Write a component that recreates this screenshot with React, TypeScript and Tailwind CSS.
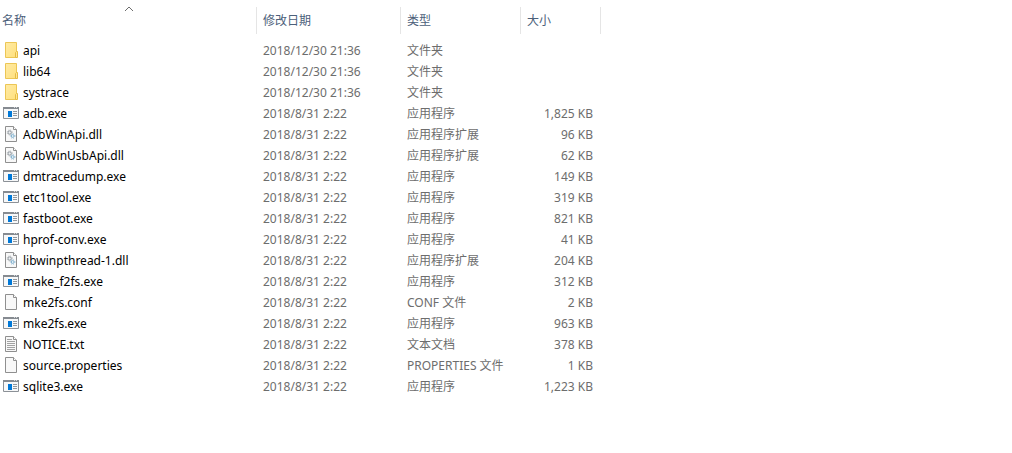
import React, { useState } from "react";

type Kind = "folder" | "exe" | "dll" | "blank" | "text";

const FILES: { name: string; date: string; type: string; size: string; kind: Kind }[] = [
  { name: "api", date: "2018/12/30 21:36", type: "文件夹", size: "", kind: "folder" },
  { name: "lib64", date: "2018/12/30 21:36", type: "文件夹", size: "", kind: "folder" },
  { name: "systrace", date: "2018/12/30 21:36", type: "文件夹", size: "", kind: "folder" },
  { name: "adb.exe", date: "2018/8/31 2:22", type: "应用程序", size: "1,825 KB", kind: "exe" },
  { name: "AdbWinApi.dll", date: "2018/8/31 2:22", type: "应用程序扩展", size: "96 KB", kind: "dll" },
  { name: "AdbWinUsbApi.dll", date: "2018/8/31 2:22", type: "应用程序扩展", size: "62 KB", kind: "dll" },
  { name: "dmtracedump.exe", date: "2018/8/31 2:22", type: "应用程序", size: "149 KB", kind: "exe" },
  { name: "etc1tool.exe", date: "2018/8/31 2:22", type: "应用程序", size: "319 KB", kind: "exe" },
  { name: "fastboot.exe", date: "2018/8/31 2:22", type: "应用程序", size: "821 KB", kind: "exe" },
  { name: "hprof-conv.exe", date: "2018/8/31 2:22", type: "应用程序", size: "41 KB", kind: "exe" },
  { name: "libwinpthread-1.dll", date: "2018/8/31 2:22", type: "应用程序扩展", size: "204 KB", kind: "dll" },
  { name: "make_f2fs.exe", date: "2018/8/31 2:22", type: "应用程序", size: "312 KB", kind: "exe" },
  { name: "mke2fs.conf", date: "2018/8/31 2:22", type: "CONF 文件", size: "2 KB", kind: "blank" },
  { name: "mke2fs.exe", date: "2018/8/31 2:22", type: "应用程序", size: "963 KB", kind: "exe" },
  { name: "NOTICE.txt", date: "2018/8/31 2:22", type: "文本文档", size: "378 KB", kind: "text" },
  { name: "source.properties", date: "2018/8/31 2:22", type: "PROPERTIES 文件", size: "1 KB", kind: "blank" },
  { name: "sqlite3.exe", date: "2018/8/31 2:22", type: "应用程序", size: "1,223 KB", kind: "exe" },
];

const COLUMNS = ["名称", "修改日期", "类型", "大小"];

function FileIcon({ kind }: { kind: Kind }) {
  if (kind === "folder") {
    return (
      <svg className="mt-0.5 w-4 h-4 shrink-0" viewBox="0 0 16 16" aria-hidden="true">
        <defs>
          <linearGradient id="folder" x1="0" y1="0" x2="1" y2="1">
            <stop offset="0" stopColor="#ffeba6" />
            <stop offset="1" stopColor="#ffe07c" />
          </linearGradient>
        </defs>
        <path d="M2.5 .5h11v15h-11z" fill="url(#folder)" stroke="#ecc655" />
        <path d="M12.5 15.5v-5l1-1h1v6z" fill="#ffe692" stroke="#e6bc45" />
      </svg>
    );
  }
  if (kind === "exe") {
    return (
      <svg className="mt-0.5 w-4 h-4 shrink-0" viewBox="0 0 16 16" aria-hidden="true">
        <path d="M.5 2.5h15v11H.5z" fill="#f7f8f9" stroke="#8c9197" />
        <path d="M0 2h16v2H0z" fill="#868b91" />
        <path d="M11 2h1v1h-1zM13 2h1v1h-1z" fill="#d5d8db" />
        <path d="M5 6h4v6H5z" fill="#0078d7" />
        <path d="M10 6.5h4M10 8.5h4M10 10.5h4" stroke="#92979c" />
      </svg>
    );
  }
  return (
    <svg className="mt-0.5 w-4 h-4 shrink-0" viewBox="0 0 16 16" aria-hidden="true">
      <path d="M2.5 .5h8l3 3v12h-11z" fill="#f8f8f8" stroke="#8f8f8f" />
      <path d="M10.5 .5v3h3" fill="#fff" stroke="#8f8f8f" />
      {kind === "text" && (
        <path d="M4 3.5h5M4 5.5h8M4 7.5h8M4 9.5h8M4 11.5h8M4 13.5h8" stroke="#a2a2a2" />
      )}
      {kind === "dll" && (
        <>
          <circle cx="6.7" cy="6.5" r="1.6" fill="#eef1f3" stroke="#9299a0" />
          <circle cx="6.7" cy="6.5" r="2.5" fill="none" stroke="#9299a0" strokeWidth=".8" strokeDasharray="1 1" />
          <circle cx="9.7" cy="10" r="1.4" fill="#eaf4fa" stroke="#86b4d0" />
          <circle cx="9.7" cy="10" r="2.3" fill="none" stroke="#86b4d0" strokeWidth=".8" strokeDasharray="1 1" />
        </>
      )}
    </svg>
  );
}

export default function App() {
  const [ascending, setAscending] = useState(true);

  // Folders stay above the files, whichever way the names run
  const files = ascending
    ? FILES
    : [...FILES].reverse().sort((a, b) => Number(b.kind === "folder") - Number(a.kind === "folder"));

  return (
    <main className="min-h-screen overflow-x-auto bg-white font-['Noto_Sans','Noto_Sans_CJK_SC',sans-serif] text-xs text-[#6d6d6d]">
      <table className="w-full table-fixed border-collapse">
        <colgroup>
          <col className="w-[257px]" />
          <col className="w-36" />
          <col className="w-[120px]" />
          <col className="w-20" />
          <col />
        </colgroup>
        <thead>
          <tr className="text-left text-[#4c607a]">
            {COLUMNS.map((label, i) => (
              <th
                key={label}
                className="relative h-10 p-0 pb-1.5 align-bottom font-normal"
                aria-sort={i === 0 ? (ascending ? "ascending" : "descending") : undefined}
              >
                <button
                  type="button"
                  onClick={() => i === 0 && setAscending(!ascending)}
                  className={`flex h-[27px] w-full items-center border-r border-[#e5e5e5] text-left ${i === 0 ? "pl-0.5" : "pl-1.5"}`}
                >
                  {label}
                </button>
                {i === 0 && (
                  <svg
                    className={`absolute left-1/2 top-1.5 h-1.5 w-2.5 -translate-x-1/2 ${ascending ? "" : "rotate-180"}`}
                    viewBox="0 0 10 6"
                    aria-hidden="true"
                  >
                    <path d="M1 5l4-4 4 4" fill="none" stroke="#6d6d6d" />
                  </svg>
                )}
              </th>
            ))}
            <td />
          </tr>
        </thead>
        <tbody>
          {files.map((file) => (
            <tr key={file.name} className="whitespace-nowrap leading-[21px] hover:bg-[#e5f3ff]">
              <td className="p-0">
                <div className="flex items-start gap-1 pl-[3px] text-black">
                  <FileIcon kind={file.kind} />
                  {file.name}
                </div>
              </td>
              <td className="p-0 pl-1.5">{file.date}</td>
              <td className="p-0 pl-1.5">{file.type}</td>
              <td className="p-0 pr-2 text-right">{file.size}</td>
              <td className="p-0" />
            </tr>
          ))}
        </tbody>
      </table>
    </main>
  );
}
